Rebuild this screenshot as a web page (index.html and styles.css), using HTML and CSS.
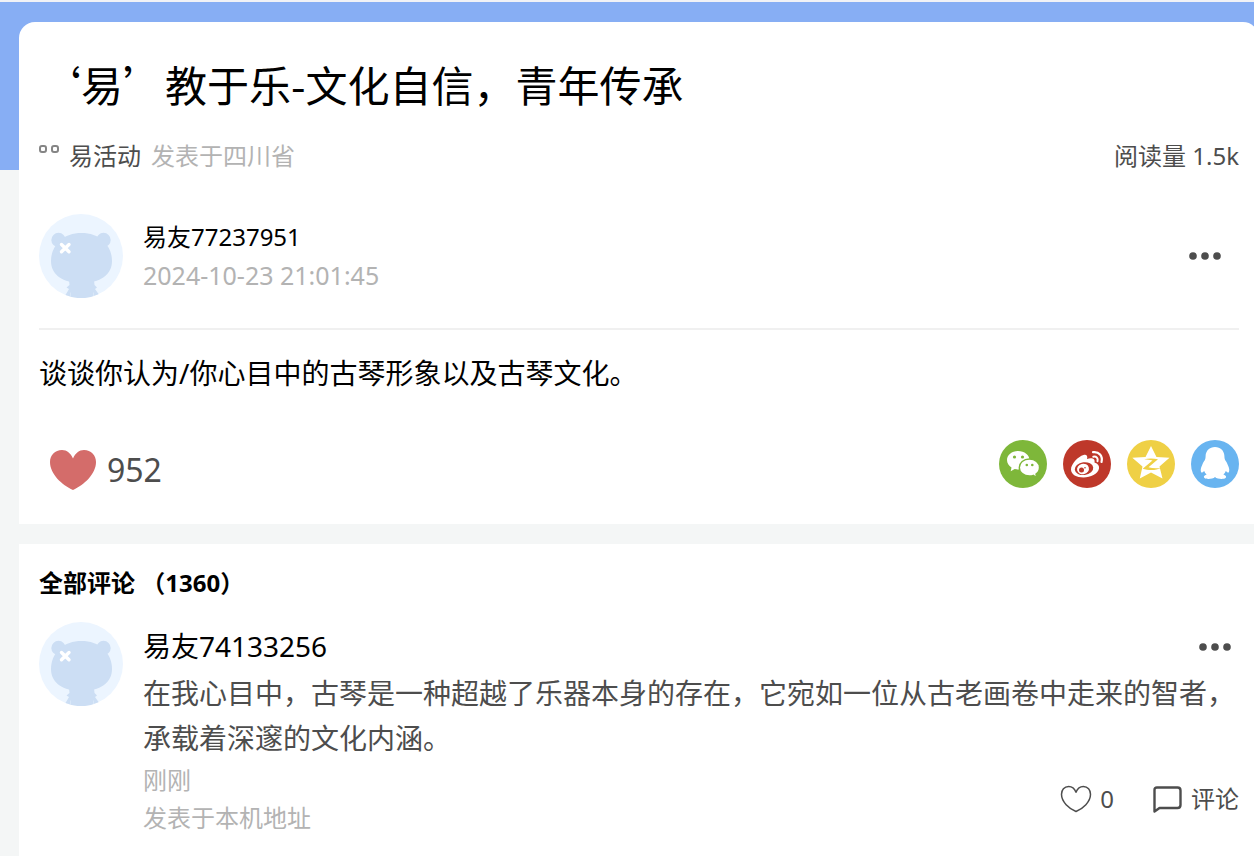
FILE: index.html
```html
<!DOCTYPE html>
<html lang="zh-CN">
<head>
    <meta charset="UTF-8">
    <meta name="viewport" content="width=device-width, initial-scale=1.0">
    <title>‘易’教于乐-文化自信，青年传承</title>
    <link rel="stylesheet" href="styles.css">
</head>
<body>
    <svg class="sprite" aria-hidden="true">
        <symbol id="bear" viewBox="0 0 84 84">
            <circle cx="42" cy="42" r="42" fill="#ecf5ff"/>
            <g fill="#ccdef4">
                <circle cx="19.500" cy="26" r="7.200"/>
                <circle cx="64.500" cy="26" r="7.200"/>
                <path d="M42.500 19C51 19 59 21.500 64 26.500C70 32 73 39 73 47C73 61 61 69 42.500 69S12 61 12 47C12 39 15 32 21 26.500C26 21.500 34 19 42.500 19Z"/>
                <path d="M30 66H55L55.500 71L58 73.500L56 75L59.500 80V80.300A42 42 0 0 1 26.500 81L30 75L27.500 73.500L30.500 71Z"/>
            </g>
            <path d="M22.500 30.500L30 37.800M30 30.500L22.500 37.800" stroke="#fff" stroke-width="3.400" stroke-linecap="round"/>
            <path d="M31.500 78.500V82.500M54.500 78.500V82.500" stroke="#ecf5ff" stroke-width=".4"/>
        </symbol>
        <symbol id="dots" viewBox="0 0 34 10">
            <circle cx="5" cy="5" r="3.800" fill="#4d4d4d"/>
            <circle cx="17" cy="5" r="3.800" fill="#4d4d4d"/>
            <circle cx="29" cy="5" r="3.800" fill="#4d4d4d"/>
        </symbol>
    </svg>

    <div class="page">
        <main class="card post">
            <h1 class="post-title">‘易’教于乐-文化自信，青年传承</h1>
            <div class="post-meta">
                <svg class="quote-icon" viewBox="0 0 20 8" fill="none" stroke="#858585" stroke-width="2">
                    <rect x="1" y="1" width="6" height="6" rx="2"/>
                    <rect x="13" y="1" width="6" height="6" rx="2"/>
                </svg>
                <a href="#" class="category">易活动</a>
                <span class="location">发表于四川省</span>
                <span class="reads">阅读量 1.5k</span>
            </div>

            <div class="author">
                <svg class="avatar"><use href="#bear"/></svg>
                <div class="author-info">
                    <div class="author-name">易友77237951</div>
                    <div class="author-time">2024-10-23 21:01:45</div>
                </div>
                <button type="button" class="more" aria-label="更多"><svg><use href="#dots"/></svg></button>
            </div>

            <p class="post-content">谈谈你认为/你心目中的古琴形象以及古琴文化。</p>

            <div class="post-footer">
                <button type="button" class="like">
                    <svg viewBox="0 0 46 40"><path fill="#d46c6a" d="M23 8.500C25.500 3 29 0 34 0C41 0 46 5 46 12C46 24 34 35 23 40C12 35 0 24 0 12C0 5 5 0 12 0C17 0 20.500 3 23 8.500Z"/></svg>
                    <span>952</span>
                </button>
                <div class="share">
                    <a href="#" aria-label="微信">
                        <svg viewBox="0 0 48 48">
                            <circle cx="24" cy="24" r="24" fill="#7eb73a"/>
                            <path fill="#fff" d="M19 11C12.700 11 8 15 8 20C8 23 9.800 25.700 12.500 27.500L11.700 31.300L15.700 29C17 29.300 18 29.500 19.500 29.500C26 29.500 30.500 25 30.500 20S25.500 11 19 11Z"/>
                            <path fill="#fff" stroke="#7eb73a" stroke-width="1.400" d="M30.500 19C24.500 19 20.300 22.800 20.300 27.500C20.300 32.500 24.800 36 30.500 36C32 36 33.200 35.800 34.300 35.400L37.600 37.500L37 34C39.300 32.500 40.500 30.200 40.500 27.500C40.500 22.800 36 19 30.500 19Z"/>
                            <g fill="#7eb73a"><circle cx="15.500" cy="17" r="1.600"/><circle cx="23.500" cy="17" r="1.600"/><circle cx="27.800" cy="25" r="1.300"/><circle cx="33.300" cy="25" r="1.300"/></g>
                        </svg>
                    </a>
                    <a href="#" aria-label="微博">
                        <svg viewBox="0 0 48 48">
                            <circle cx="24" cy="24" r="24" fill="#be382a"/>
                            <path fill="#fff" d="M20.500 15C23.500 14.200 25 16 24 19C28 17.500 32.500 18 31.500 22.500C35 23.500 36.500 26 36 28.500C35 34 27.500 37.500 20.500 37.500C13.500 37.500 8 34.500 8 29.500C8 24 15 16.500 20.500 15Z"/>
                            <ellipse cx="21" cy="28.600" rx="9.300" ry="6.400" transform="rotate(-7 21 28.600)" fill="#be382a"/>
                            <ellipse cx="20" cy="29" rx="6" ry="5.200" transform="rotate(-15 20 29)" fill="#fff"/>
                            <circle cx="18.500" cy="30" r="2.500" fill="#be382a"/>
                            <circle cx="22" cy="27.800" r=".8" fill="#be382a"/>
                            <g fill="none" stroke="#fff" stroke-linecap="round"><path stroke-width="2.200" d="M30 12.200C36 11.300 40 16 38.500 22"/><path stroke-width="2" d="M30.300 16.700C33.500 16.200 35.300 18.300 34.500 21.300"/></g>
                        </svg>
                    </a>
                    <a href="#" aria-label="QQ空间">
                        <svg viewBox="0 0 48 48">
                            <circle cx="24" cy="24" r="24" fill="#efd045"/>
                            <path fill="#fff" d="M24 6L29.500 17L42.500 17.800L32.500 26.500L35.500 38.500L24 32.500L12.800 38.500L15.500 26.500L5.300 17.800L18.500 17Z"/>
                            <path fill="#efd045" d="M17.200 19.300C21.500 18.300 26 18.300 31 19.200L21.500 27.300C25.500 28.300 29.500 28.600 34 27.700C29.500 30.500 22 30.800 15.700 28.700L25.500 20.600C22.500 19.700 20.500 19.500 17.200 19.300Z"/>
                        </svg>
                    </a>
                    <a href="#" aria-label="QQ">
                        <svg viewBox="0 0 48 48">
                            <circle cx="24" cy="24" r="24" fill="#68b4f0"/>
                            <path fill="#fff" d="M24 7C18.500 7 14.800 10.800 14.600 16C14.600 18 14.300 19 13.600 20.500C12.600 22 11.800 23 11.200 25C9.600 28 9.300 31 10.300 32.500C11.300 32.800 12.300 32 13.200 31C13.700 32.500 14.500 33.700 15.600 34.600C13.300 35.300 12.300 36.600 13.200 37.800C14.800 39.600 21.500 39.400 24 37C26.500 39.400 33.300 39.600 34.800 37.800C35.700 36.600 34.700 35.300 32.400 34.600C33.500 33.700 34.300 32.500 34.800 31C35.700 32 36.700 32.800 37.700 32.500C38.700 31 38.400 28 36.800 25C36.200 23 35.400 22 34.400 20.500C33.700 19 33.400 18 33.400 16C33.200 10.800 29.500 7 24 7Z"/>
                        </svg>
                    </a>
                </div>
            </div>
        </main>

        <section class="card comments">
            <h2 class="comments-title">全部评论 （1360）</h2>
            <article class="comment">
                <svg class="avatar"><use href="#bear"/></svg>
                <div class="comment-body">
                    <div class="comment-head">
                        <span class="comment-name">易友74133256</span>
                        <button type="button" class="more" aria-label="更多"><svg><use href="#dots"/></svg></button>
                    </div>
                    <p class="comment-text">在我心目中，古琴是一种超越了乐器本身的存在，它宛如一位从古老画卷中走来的智者，承载着深邃的文化内涵。</p>
                    <div class="comment-foot">
                        <div class="comment-info">
                            <div>刚刚</div>
                            <div>发表于本机地址</div>
                        </div>
                        <div class="comment-actions">
                            <button type="button">
                                <svg viewBox="0 0 32 28" fill="none" stroke="#4d4d4d" stroke-width="1.500" stroke-linejoin="round"><path d="M16 7.200C17.500 3.500 20 1.500 23.300 1.500C27.800 1.500 30.500 5 30.500 9.300C30.500 17 23 23.500 16 26.500C9 23.500 1.500 17 1.500 9.300C1.500 5 4.200 1.500 8.700 1.500C12 1.500 14.500 3.500 16 7.200Z"/></svg>
                                <span>0</span>
                            </button>
                            <button type="button">
                                <svg viewBox="0 0 32 28" fill="none" stroke="#4d4d4d" stroke-width="2.400" stroke-linejoin="round"><path d="M6 2.500H26.500Q29.500 2.500 29.500 5.500V20Q29.500 23 26.500 23H8.500L3.500 26.500V5Q3.500 2.500 6 2.500Z"/></svg>
                                <span>评论</span>
                            </button>
                        </div>
                    </div>
                </div>
            </article>
        </section>
    </div>
</body>
</html>
```
FILE: styles.css
```css
* {
    box-sizing: border-box;
}

body {
    margin: 0;
    min-height: 100vh;
    overflow-x: hidden;
    font-family: "Noto Sans", "Noto Sans CJK SC", sans-serif;
    font-size: 24px;
    color: #000;
    background: linear-gradient(#f1f2f6 2px, #87aef4 2px, #87aef4 170px, #f4f6f6 170px);
}

h1, h2, p {
    margin: 0;
}

a {
    color: inherit;
    text-decoration: none;
}

button {
    display: flex;
    align-items: center;
    padding: 0;
    border: none;
    background: none;
    font: inherit;
    color: #4d4d4d;
    cursor: pointer;
}

svg {
    display: block;
    flex: none;
}

.sprite {
    position: absolute;
    width: 0;
    height: 0;
}

/* the cards run slightly past the right edge */
.page {
    display: flex;
    flex-direction: column;
    gap: 20px;
    min-height: 100vh;
    margin-right: -5px;
    padding: 22px 0 0 19px;
}

.card {
    padding: 0 20px;
    background: #fff;
}

.post {
    padding-top: 30px;
    padding-bottom: 24px;
    border-radius: 16px 16px 0 0;
}

.post-title {
    font-family: "Noto Sans CJK SC", sans-serif;
    font-size: 42px;
    font-weight: 400;
    line-height: 64px;
}

.post-meta {
    display: flex;
    gap: 10px;
    margin-top: 22px;
    line-height: 36px;
    color: #4d4d4d;
}

.quote-icon {
    width: 20px;
    height: 8px;
    margin-top: 7px;
}

.location {
    color: #b3b3b3;
}

.reads {
    margin-left: auto;
}

.author {
    display: flex;
    align-items: center;
    gap: 20px;
    margin-top: 40px;
    padding-bottom: 30px;
    border-bottom: 2px solid #f0f0f0;
}

.avatar {
    width: 84px;
    height: 84px;
}

.author-info {
    line-height: 38px;
}

.author-time {
    font-size: 25px;
    color: #b3b3b3;
}

.more {
    margin-left: auto;
    margin-right: 17px;
}

.more svg {
    width: 34px;
    height: 10px;
}

.post-content {
    margin-top: 21px;
    font-size: 28px;
    line-height: 44px;
}

.post-footer {
    display: flex;
    justify-content: space-between;
    align-items: flex-start;
    margin-top: 45px;
}

.like {
    gap: 11px;
    padding-left: 11px;
    font-size: 32px;
    line-height: 60px;
}

.like svg {
    width: 46px;
    height: 40px;
}

.share {
    display: flex;
    gap: 16px;
}

.share svg {
    width: 48px;
    height: 48px;
}

.comments {
    flex: 1;
    padding-top: 20px;
    padding-bottom: 20px;
}

.comments-title {
    font-size: 24px;
    font-weight: 700;
    line-height: 38px;
}

.comment {
    display: flex;
    gap: 20px;
    margin-top: 20px;
}

.comment-body {
    flex: 1;
}

.comment-head {
    display: flex;
    align-items: center;
    font-size: 28px;
    line-height: 49px;
}

.comment-head .more {
    margin-right: 7px;
}

.comment-text {
    font-size: 28px;
    line-height: 45px;
    color: #4d4d4d;
}

.comment-foot {
    display: flex;
    justify-content: space-between;
    align-items: center;
    line-height: 38px;
}

.comment-info {
    color: #b3b3b3;
}

.comment-actions {
    display: flex;
    gap: 37px;
}

.comment-actions button {
    gap: 8px;
}

.comment-actions svg {
    width: 32px;
    height: 28px;
}
```
